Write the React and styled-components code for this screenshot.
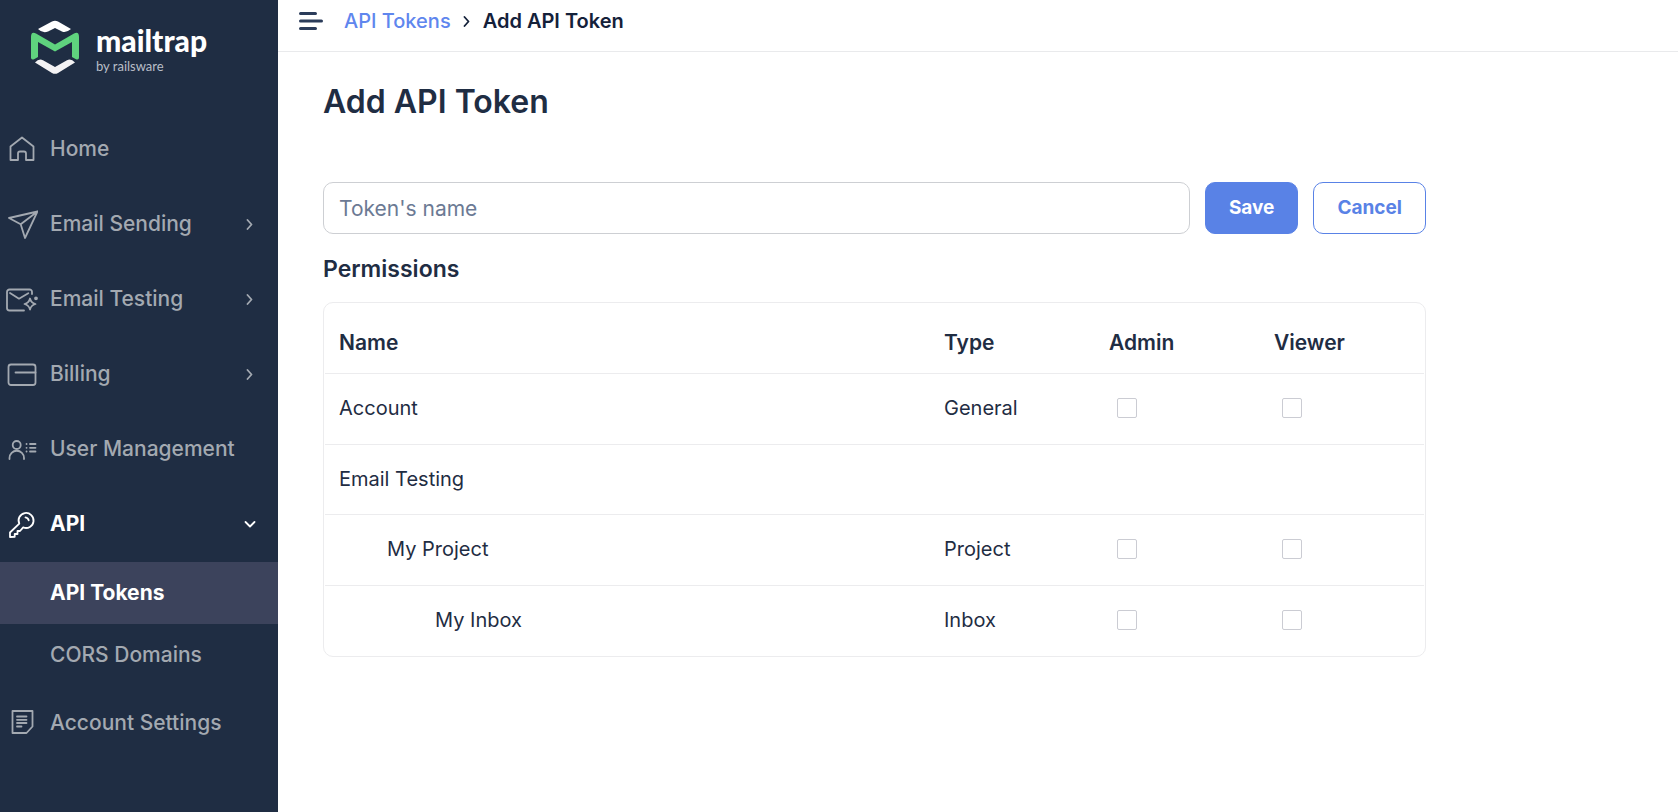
import React from "react";
import styled, { createGlobalStyle } from "styled-components";

const GlobalStyle = createGlobalStyle`
  * {
    box-sizing: border-box;
  }
  body {
    margin: 0;
    background: #fff;
    color: #1f2d43;
    font-family: Inter, "Liberation Sans", sans-serif;
    font-size: 21px;
    line-height: 28px;
  }
`;

const StyledPage = styled.div`
  display: flex;
  min-height: 100vh;
`;

const StyledSidebar = styled.aside`
  width: 278px;
  flex-shrink: 0;
  background: #1f2d43;
`;

const StyledLogo = styled.a`
  display: flex;
  gap: 16px;
  height: 112px;
  padding: 20px 0 0 30px;
  color: #fff;
  font-family: Lato, sans-serif;
  text-decoration: none;

  .name {
    display: block;
    padding-top: 2px;
    font-size: 30px;
    font-weight: 900;
    line-height: 36px;
  }
  .owner {
    display: block;
    color: #b9bfc8;
    font-size: 13px;
    line-height: 16px;
  }
`;

const StyledNavItem = styled.a`
  display: flex;
  align-items: center;
  gap: 12px;
  height: 75px;
  padding: 0 22px 2px 6px;
  color: ${({ $active }) => ($active ? "#fff" : "#a3a9b1")};
  font-weight: ${({ $active }) => ($active ? 700 : 500)};
  text-decoration: none;

  .label {
    flex: 1;
    white-space: nowrap;
  }
`;

const StyledSubItem = styled.a`
  display: flex;
  align-items: center;
  height: 62px;
  padding-left: 50px;
  background: ${({ $active }) => ($active ? "#3c435c" : "transparent")};
  color: ${({ $active }) => ($active ? "#fff" : "#a3a9b1")};
  font-weight: ${({ $active }) => ($active ? 700 : 500)};
  text-decoration: none;
`;

const StyledIcon = styled.svg`
  flex-shrink: 0;
  fill: none;
  stroke: currentColor;
  stroke-linecap: round;
  stroke-linejoin: round;
`;

const StyledMain = styled.div`
  flex: 1;
  min-width: 0;
`;

const StyledTopBar = styled.header`
  display: flex;
  align-items: center;
  height: 52px;
  padding: 0 20px 10px;
  border-bottom: 1px solid #e9eaec;
  color: #14213a;
  font-size: 20px;
`;

const StyledMenuButton = styled.button`
  display: flex;
  padding: 0;
  margin-right: 20px;
  border: 0;
  background: none;
  color: #2b3c5a;
`;

const StyledBreadcrumbs = styled.nav`
  display: flex;
  align-items: center;
  gap: 10px;
  font-weight: 600;

  a {
    color: #5f86ee;
    font-weight: 500;
    text-decoration: none;
  }
`;

const StyledContent = styled.main`
  max-width: 1148px;
  padding: 29px 0 28px 45px;

  h1 {
    margin: 0 0 59px;
    font-size: 32px;
    font-weight: 600;
    line-height: 42px;
  }
  h2 {
    margin: 21px 0 19px;
    font-size: 23px;
    font-weight: 600;
    line-height: 28px;
  }
`;

const StyledForm = styled.form`
  display: flex;
  gap: 15px;
`;

const StyledInput = styled.input`
  flex: 1;
  min-width: 0;
  height: 52px;
  padding: 0 15px;
  border: 1px solid #cdcfd3;
  border-radius: 10px;
  color: inherit;
  font: inherit;

  &::placeholder {
    color: #6c7a94;
    opacity: 1;
  }
`;

const StyledButton = styled.button`
  height: 52px;
  padding: 0 23px;
  border: 1px solid #5982e6;
  border-radius: 10px;
  background: ${({ $primary }) => ($primary ? "#5982e6" : "#fff")};
  color: ${({ $primary }) => ($primary ? "#fff" : "#5982e6")};
  font: inherit;
  font-size: 19px;
  font-weight: 700;
`;

const StyledTableBox = styled.div`
  padding: 0 1px;
  border: 1px solid #ececee;
  border-radius: 10px;
`;

const StyledTable = styled.table`
  width: 100%;
  table-layout: fixed;
  border-spacing: 0;

  th,
  td {
    height: 71px;
    border-bottom: 1px solid #ececee;
    text-align: left;
  }
  th {
    padding: 10px 0 0;
    font-weight: 600;
  }
  td {
    padding: 0 0 2px;
    font-size: 20px;
  }
  th:first-child,
  td:first-child {
    padding-left: 14px;
  }
  th:nth-child(2) {
    width: 165px;
  }
  th:nth-child(3) {
    width: 165px;
  }
  th:nth-child(4) {
    width: 150px;
  }
  tr:nth-child(even) td {
    height: 70px;
  }
  tr:last-child td {
    border-bottom: 0;
  }
`;

const StyledName = styled.span`
  padding-left: ${({ $level }) => $level * 48}px;
`;

const StyledCheckbox = styled.input`
  appearance: none;
  display: block;
  width: 20px;
  height: 20px;
  margin: 0 0 0 8px;
  border: 1px solid #cbccd3;
  border-radius: 2px;
  background: #fff;

  &:checked {
    border-color: #5982e6;
    background: #5982e6;
  }
`;

const icons = {
  home: (
    <path d="M4.500 13.500 16 4.500l11.500 9V27H20v-6.500a2 2 0 0 0-2-2h-4a2 2 0 0 0-2 2V27H4.500z" />
  ),
  send: <path d="M31.500 3.500 3 10l11.700 6.300L19 30zM31.500 3.500 14.700 16.300" />,
  testing: (
    <>
      <path d="M18 27.500H3.500A2.500 2.500 0 0 1 1 25V9a2.500 2.500 0 0 1 2.500-2.500h20A2.500 2.500 0 0 1 26 9v2" />
      <path d="m4 10 9 5.700 9.300-5.400" />
      <path d="M24 15.500c.8 3.300 2.200 4.700 5.500 5.500-3.300.8-4.700 2.200-5.500 5.500-.8-3.300-2.200-4.700-5.500-5.500 3.300-.8 4.700-2.200 5.500-5.500z" />
      <circle cx="30" cy="15.300" r="1" fill="currentColor" />
    </>
  ),
  billing: (
    <>
      <rect x="2.500" y="6.500" width="27" height="20.500" rx="2.500" />
      <path d="M9.500 14.500h20" />
    </>
  ),
  users: (
    <>
      <circle cx="10.700" cy="12" r="4" />
      <path d="M3.500 26v-1a7 7 0 0 1 14.500 0v1M20.500 11h.1M20.500 14.800h.1M20.500 18.500h.1M24 11h5.500M24 14.800h5.500M24 18.500h5.500" />
    </>
  ),
  key: (
    <>
      <path d="M13.300 15.700A7.500 7.500 0 1 1 17.200 19.400L14 23h-2.500v3H8.700v2.800L4 29v-4.500z" />
      <path d="M19.500 9.300a4 4 0 0 1 3.200 3" />
    </>
  ),
  settings: (
    <path d="M6.500 4h20v15.500L20.500 26h-14zM11 9.500h9.500M11 12.800h9.500M11 16h9.500M11 19.500h4.500" />
  ),
};

const navItems = [
  { label: "Home", icon: "home" },
  { label: "Email Sending", icon: "send", expandable: true },
  { label: "Email Testing", icon: "testing", expandable: true },
  { label: "Billing", icon: "billing", expandable: true },
  { label: "User Management", icon: "users" },
  {
    label: "API",
    icon: "key",
    expandable: true,
    active: true,
    children: [{ label: "API Tokens", active: true }, { label: "CORS Domains" }],
  },
  { label: "Account Settings", icon: "settings" },
];

const permissions = [
  { name: "Account", type: "General", level: 0 },
  { name: "Email Testing", level: 0 },
  { name: "My Project", type: "Project", level: 1 },
  { name: "My Inbox", type: "Inbox", level: 2 },
];

const Chevron = ({ down }) => (
  <StyledIcon width="12" height="12" viewBox="0 0 12 12" strokeWidth="1.800">
    <path d={down ? "m1.500 4 4.500 4.500L10.500 4" : "m3.500 2 4 4.500-4 4.500"} />
  </StyledIcon>
);

const Logo = () => (
  <StyledLogo href="#">
    <svg width="50" height="55" viewBox="0 0 50 55" aria-hidden="true">
      <path
        d="M8 9 22 1.600Q25 0 28 1.600L41 9q-5.500 4.500-9 2.500L25 8l-7 3.500Q13 14 8 9z"
        fill="#fff"
      />
      <path
        d="M1 17q0-6 5-3.500L25 24.500l19-11q5-2.500 5 3.500v20.500q0 3-3.500 1.500L42 37V22L25 31.500 8 22v15l-3.500 2Q1 40.500 1 37.500z"
        fill="#5fd37e"
      />
      <path
        d="M5 42.500q4-4.500 8-2.300L25 47l12-6.800q4-2.200 8 2.300L28 53q-3 1.700-6 0z"
        fill="#f3f2f4"
      />
    </svg>
    <span>
      <span className="name">mailtrap</span>
      <span className="owner">by railsware</span>
    </span>
  </StyledLogo>
);

const Sidebar = () => (
  <StyledSidebar>
    <Logo />
    <nav>
      {navItems.map(({ label, icon, expandable, active, children }) => (
        <React.Fragment key={label}>
          <StyledNavItem href="#" $active={active}>
            <StyledIcon width="32" height="32" viewBox="0 0 32 32" strokeWidth="1.800">
              {icons[icon]}
            </StyledIcon>
            <span className="label">{label}</span>
            {expandable && <Chevron down={active} />}
          </StyledNavItem>
          {children?.map((child) => (
            <StyledSubItem href="#" key={child.label} $active={child.active}>
              {child.label}
            </StyledSubItem>
          ))}
        </React.Fragment>
      ))}
    </nav>
  </StyledSidebar>
);

const App = () => {
  return (
    <StyledPage>
      <GlobalStyle />
      <Sidebar />
      <StyledMain>
        <StyledTopBar>
          <StyledMenuButton type="button" aria-label="Toggle menu">
            <StyledIcon width="26" height="22" viewBox="0 0 26 22" strokeWidth="3">
              <path d="M2.500 3.500h15M2.500 11h21M2.500 18.500h15" />
            </StyledIcon>
          </StyledMenuButton>
          <StyledBreadcrumbs>
            <a href="#">API Tokens</a>
            <Chevron />
            <span>Add API Token</span>
          </StyledBreadcrumbs>
        </StyledTopBar>
        <StyledContent>
          <h1>Add API Token</h1>
          <StyledForm onSubmit={(e) => e.preventDefault()}>
            <StyledInput type="text" placeholder="Token's name" aria-label="Token's name" />
            <StyledButton type="submit" $primary>
              Save
            </StyledButton>
            <StyledButton type="button">Cancel</StyledButton>
          </StyledForm>
          <h2>Permissions</h2>
          <StyledTableBox>
            <StyledTable>
              <thead>
                <tr>
                  <th>Name</th>
                  <th>Type</th>
                  <th>Admin</th>
                  <th>Viewer</th>
                </tr>
              </thead>
              <tbody>
                {permissions.map(({ name, type, level }) => (
                  <tr key={name}>
                    <td>
                      <StyledName $level={level}>{name}</StyledName>
                    </td>
                    <td>{type}</td>
                    <td>
                      {type && <StyledCheckbox type="checkbox" aria-label={`${name} admin`} />}
                    </td>
                    <td>
                      {type && <StyledCheckbox type="checkbox" aria-label={`${name} viewer`} />}
                    </td>
                  </tr>
                ))}
              </tbody>
            </StyledTable>
          </StyledTableBox>
        </StyledContent>
      </StyledMain>
    </StyledPage>
  );
};

export default App;
